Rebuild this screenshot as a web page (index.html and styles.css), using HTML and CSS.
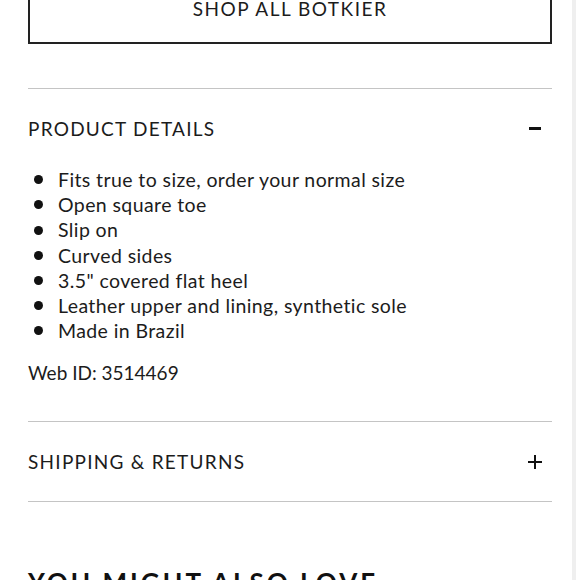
FILE: index.html
```html
<!DOCTYPE html>
<html lang="en">
<head>
<meta charset="utf-8">
<title>Product details</title>
<link rel="stylesheet" href="styles.css">
</head>
<body>
<div class="page">
  <main class="content">
    <a class="shop-btn" href="#">SHOP ALL BOTKIER</a>

    <section class="acc acc-open">
      <div class="acc-head">
        <h2 class="acc-title">PRODUCT DETAILS</h2>
        <span class="icon-minus" aria-hidden="true"></span>
      </div>
      <div class="acc-body">
        <ul class="details">
          <li>Fits true to size, order your normal size</li>
          <li>Open square toe</li>
          <li>Slip on</li>
          <li>Curved sides</li>
          <li>3.5" covered flat heel</li>
          <li>Leather upper and lining, synthetic sole</li>
          <li>Made in Brazil</li>
        </ul>
        <p class="webid">Web ID: 3514469</p>
      </div>
    </section>

    <section class="acc acc-closed">
      <div class="acc-head">
        <h2 class="acc-title">SHIPPING &amp; RETURNS</h2>
        <span class="icon-plus" aria-hidden="true"></span>
      </div>
    </section>

    <h2 class="love">YOU MIGHT ALSO LOVE</h2>
  </main>
  <div class="scroll-edge"></div>
</div>
</body>
</html>
```

FILE: styles.css
```css
html, body {
  margin: 0;
  padding: 0;
  background: #fff;
}
body {
  font-family: "Lato", "Noto Sans", sans-serif;
  color: #1c1c1c;
  overflow: hidden;
  height: 580px;
}
.page {
  display: flex;
  width: 580px;
  height: 580px;
}
.content {
  width: 524px;
  padding: 0 20px 0 28px;
  flex: none;
}
.scroll-edge {
  width: 4px;
  background: #efefef;
  flex: none;
}
.shop-btn {
  display: flex;
  align-items: center;
  justify-content: center;
  height: 66px;
  margin-top: -22px;
  padding-bottom: 6px;
  border: 2px solid #222;
  color: #1c1c1c;
  text-decoration: none;
  font-size: 19px;
  letter-spacing: 1.5px;
  box-sizing: border-box;
}
.acc {
  border-bottom: 1px solid #c4c4c4;
}
.shop-btn + .acc {
  margin-top: 44px;
  border-top: 1px solid #c4c4c4;
}
.acc-head {
  display: flex;
  align-items: center;
  justify-content: space-between;
  height: 78px;
}
.acc-closed .acc-head {
  height: 79px;
}
.acc-title {
  margin: 0;
  font-weight: 400;
  font-size: 19px;
  letter-spacing: 1.25px;
}
.icon-minus {
  width: 12px;
  height: 3px;
  background: #111;
  margin-right: 11px;
}
.icon-plus {
  position: relative;
  width: 14px;
  height: 14px;
  margin-right: 10px;
}
.icon-plus::before,
.icon-plus::after {
  content: "";
  position: absolute;
  background: #111;
}
.icon-plus::before {
  left: 0;
  top: 6px;
  width: 14px;
  height: 2px;
}
.icon-plus::after {
  left: 6px;
  top: 0;
  width: 2px;
  height: 14px;
}
.acc-body {
  padding-bottom: 36px;
}
.details {
  list-style: none;
  margin: 0;
  padding: 0;
}
.details li {
  display: flex;
  align-items: center;
  gap: 15px;
  font-size: 19.5px;
  line-height: 25.2px;
  letter-spacing: 0.4px;
}
.details li::before {
  content: "";
  width: 9px;
  height: 9px;
  border-radius: 50%;
  background: #111;
  margin-left: 6px;
  flex: none;
}
.webid {
  margin: 17px 0 0;
  font-size: 19px;
  line-height: 25px;
  letter-spacing: 0;
}
.love {
  margin: 64px 0 0;
  font-size: 26px;
  font-weight: 700;
  letter-spacing: 3px;
  color: #111;
}
```
